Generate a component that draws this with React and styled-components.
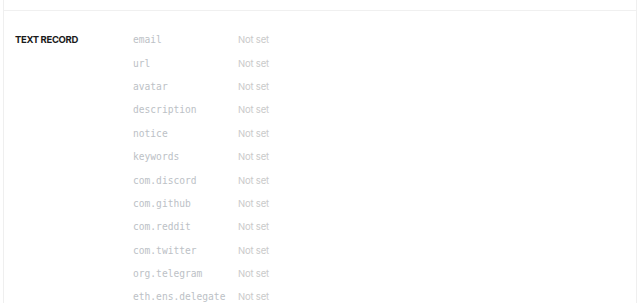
import styled, { createGlobalStyle } from "styled-components";

const GlobalStyle = createGlobalStyle`
	html, body {
		margin: 0;
		padding: 0;
		background: #fff;
		font-family: "Inter", "Liberation Sans", sans-serif;
	}
`;

const records = [
	"email",
	"url",
	"avatar",
	"description",
	"notice",
	"keywords",
	"com.discord",
	"com.github",
	"com.reddit",
	"com.twitter",
	"org.telegram",
	"eth.ens.delegate",
];

function App() {
	return (
		<>
			<GlobalStyle />
			<Card>
				<TopSpace />
				<Section>
					<Label>TEXT RECORD</Label>
					<Records>
						{records.map((key) => (
							<Row key={key}>
								<Key>{key}</Key>
								<Value>Not set</Value>
							</Row>
						))}
					</Records>
				</Section>
			</Card>
		</>
	);
}

export default App;

const Card = styled.div`
	margin: 0 3px 0 3px;
	height: 303px;
	overflow: hidden;
	border-left: 1px solid #efefef;
	border-right: 1px solid #efefef;
	box-sizing: border-box;
`;

const TopSpace = styled.div`
	height: 10px;
	border-bottom: 1px solid #f0f0f0;
`;

const Section = styled.div`
	display: grid;
	grid-template-columns: 118px 1fr;
	padding: 17px 0 0 11px;
`;

const Label = styled.div`
	font-size: 9.5px;
	font-weight: 700;
	color: #1a1a1a;
	line-height: 23.4px;
	letter-spacing: -0.35px;
`;

const Records = styled.div`
	display: flex;
	flex-direction: column;
`;

const Row = styled.div`
	display: grid;
	grid-template-columns: 105px 1fr;
	height: 23.4px;
	align-items: center;
`;

const Key = styled.span`
	font-family: "DejaVu Sans Mono", monospace;
	font-size: 9.6px;
	color: #bcc1c6;
`;

const Value = styled.span`
	font-size: 9.5px;
	letter-spacing: -0.2px;
	color: #cacaca;
`;
